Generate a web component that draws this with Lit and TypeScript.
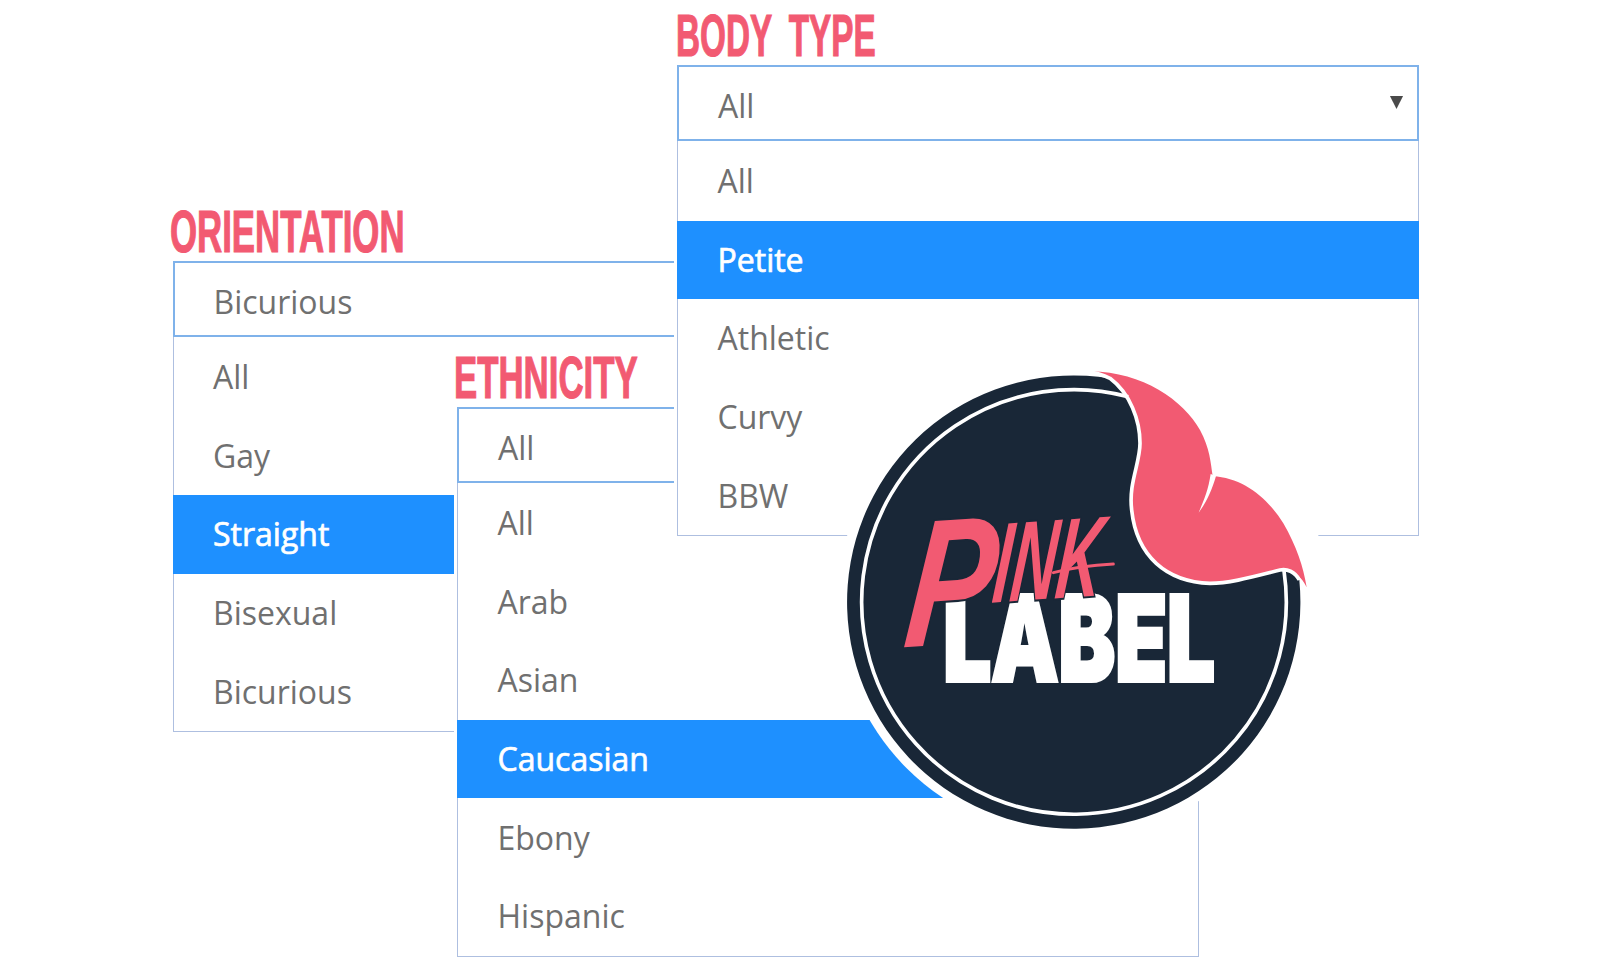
import { LitElement, html, css, svg } from "lit";
import { customElement, property } from "lit/decorators.js";

@customElement("select-panel")
class SelectPanel extends LitElement {
  @property() label = "";
  @property() value = "";
  @property({ type: Array }) options: string[] = [];
  @property() selected = "";
  @property({ type: Boolean }) arrow = false;

  static styles = css`
    :host { display: block; font-family: "Open Sans", sans-serif; color: #707070; }
    .label {
      height: 52px; line-height: 46px; white-space: nowrap;
      font-family: "Liberation Sans Narrow", "Liberation Sans", sans-serif;
      font-weight: 700; font-size: 60px; color: #f25a72;
      transform: scaleX(var(--label-scale, 0.58)); transform-origin: left center;
      -webkit-text-stroke: 1.2px #f25a72;
      word-spacing: var(--label-gap, 0);
      margin-left: var(--label-shift, -3px);
    }
    .frame { background: #fff; box-shadow: 0 0 0 3px #fff; }
    .box {
      height: 76px; box-sizing: border-box; border: 2px solid #7fb2ea;
      display: flex; align-items: center; justify-content: space-between;
      padding: 5px 13px 0 39px; font-size: 32px;
    }
    .arrow { width: 15px; height: 15px; margin-top: -6px; display: block; fill: #4a4a4a; }
    .list {
      box-sizing: border-box; padding-top: 1px;
      border: 1px solid #aebfe0; border-top: 0;
    }
    .row {
      height: 78.6px; display: flex; align-items: center; padding-bottom: 1px; box-sizing: border-box;
      padding-left: 39.5px; font-size: 32px;
    }
    .row.on {
      background: #1e90ff; color: #fff; font-weight: 500; margin: 0 -1px; padding-left: 40.5px;
      -webkit-text-stroke: 0.7px #fff;
    }
  `;

  render() {
    return html`
      <div class="label">${this.label}</div>
      <div class="frame">
        <div class="box">
          <span>${this.value}</span>
          ${this.arrow ? html`<svg class="arrow" viewBox="0 0 16 16"><path d="M1 1h14L8 15z"/></svg>` : ""}
        </div>
        <div class="list">
          ${this.options.map(
            (o) => html`<div class="row ${o === this.selected ? "on" : ""}">${o}</div>`
          )}
        </div>
      </div>
    `;
  }
}

@customElement("pink-logo")
class PinkLogo extends LitElement {
  static styles = css`
    :host { display: block; width: 500px; height: 490px; }
    svg { display: block; width: 500px; height: 490px; overflow: visible; }
    .label { font-family: Inter, "Liberation Sans", sans-serif; font-weight: 900; font-size: 355px; fill: #fff; stroke: #fff; stroke-width: 12px; }
    .script { font-family: "Liberation Sans Narrow", "Liberation Sans", sans-serif; font-style: italic; font-weight: 700; fill: #f25a72; stroke: #192737; stroke-width: 12px; paint-order: stroke; }
  `;
  render() {
    return html`<svg viewBox="0 0 1500 1470" aria-label="Pink Label">
      <circle cx="760" cy="755" r="707" fill="#fff"/>
      ${svg`
      <path fill="#fff" d="M870 70 L1480 60 L1500 720 L1300 900 L900 500 Z"/>
      <path fill="#f25a72" d="M800 65 C960 60 1090 150 1140 240 C1170 295 1172 340 1178 378 C1270 385 1340 440 1390 520 C1430 590 1450 650 1460 712 C1445 680 1420 660 1385 660 C1300 680 1230 700 1170 700 C1040 695 950 620 935 480 C925 400 960 340 960 280 C960 210 930 130 870 85 C850 75 825 68 800 65 Z"/>
      <path fill="#fff" d="M1172 372 C1165 420 1150 455 1136 488 C1160 455 1176 420 1188 378 Z"/>
      <path fill="#192737" d="M870 85 A680 680 0 1 0 1438 690 C1425 665 1400 655 1380 660 C1300 680 1230 700 1170 700 C1040 695 950 620 935 480 C925 400 960 340 960 280 C960 210 930 130 870 85 Z"/>
      <path fill="none" stroke="#fff" stroke-width="11" d="M1392 662 A637 637 0 1 1 925 140"/>
      <path fill="none" stroke="#fff" stroke-width="11" d="M1438 690 C1425 665 1400 655 1380 660 C1300 680 1230 700 1170 700 C1040 695 950 620 935 480 C925 400 960 340 960 280 C960 210 930 130 870 85 C850 75 825 68 800 65"/>
      `}
      <text class="label" x="370" y="994" textLength="815" lengthAdjust="spacingAndGlyphs">LABEL</text>
      <text class="script" transform="rotate(-4 560 680) skewX(-10)"><tspan x="385" y="870" font-size="540" textLength="265" lengthAdjust="spacingAndGlyphs">P</tspan><tspan x="640" y="755" font-size="340" textLength="325" lengthAdjust="spacingAndGlyphs">INK</tspan></text>
      <path fill="none" stroke="#f25a72" stroke-width="9" stroke-linecap="round" d="M700 668 C760 652 820 645 880 642"/>
    </svg>`;
  }
}

@customElement("app-root")
class AppRoot extends LitElement {
  static styles = css`
    :host { display: block; position: relative; width: 1600px; height: 960px; overflow: hidden; background: #fff; }
    select-panel, pink-logo { position: absolute; }
    .orientation { left: 172.5px; top: 209px; width: 742px; }
    .ethnicity { left: 457px; top: 355px; width: 742px; }
    .body-type { left: 677px; top: 13px; width: 742px; --label-shift: -1.5px; --label-scale: 0.555; --label-gap: 14px; }
    pink-logo { left: 820px; top: 350px; }
  `;
  render() {
    return html`
      <select-panel class="orientation" label="ORIENTATION" value="Bicurious" selected="Straight"
        .options=${["All", "Gay", "Straight", "Bisexual", "Bicurious"]}></select-panel>
      <select-panel class="ethnicity" label="ETHNICITY" value="All" selected="Caucasian"
        .options=${["All", "Arab", "Asian", "Caucasian", "Ebony", "Hispanic"]}></select-panel>
      <select-panel class="body-type" label="BODY TYPE" value="All" selected="Petite" arrow
        .options=${["All", "Petite", "Athletic", "Curvy", "BBW"]}></select-panel>
      <pink-logo></pink-logo>
    `;
  }
}
